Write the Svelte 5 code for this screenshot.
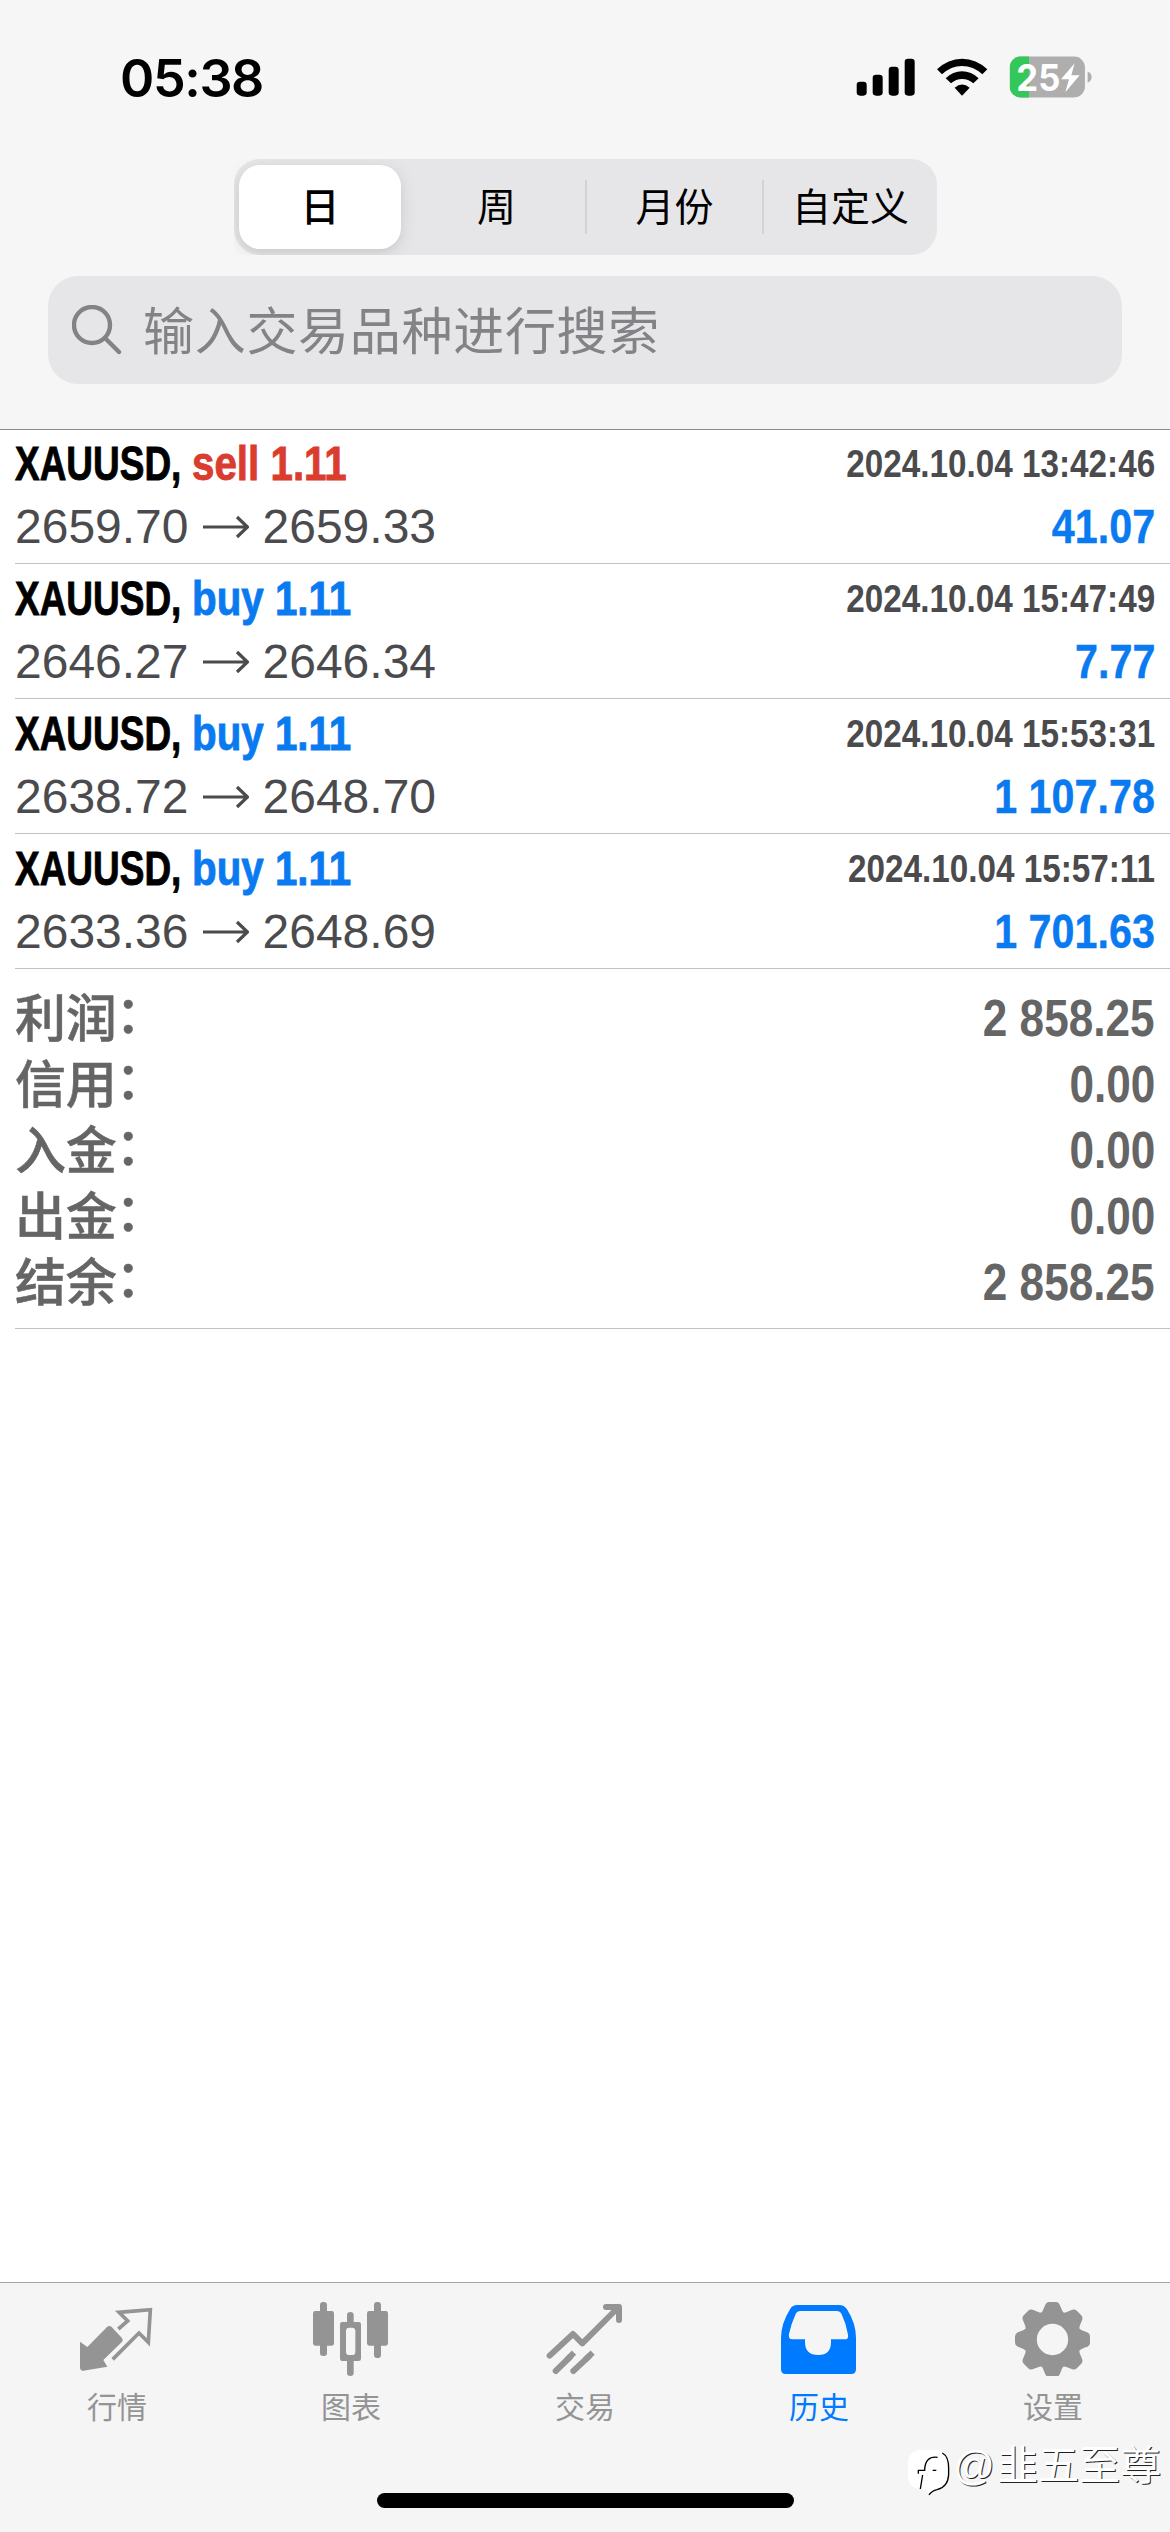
<script>
	const segments = ['日', '周', '月份', '自定义']
	let period = $state('日')
	let tab = $state('历史')

	const deals = [
		{ symbol: 'XAUUSD', side: 'sell', volume: '1.11', open: '2659.70', close: '2659.33', time: '2024.10.04 13:42:46', profit: '41.07' },
		{ symbol: 'XAUUSD', side: 'buy', volume: '1.11', open: '2646.27', close: '2646.34', time: '2024.10.04 15:47:49', profit: '7.77' },
		{ symbol: 'XAUUSD', side: 'buy', volume: '1.11', open: '2638.72', close: '2648.70', time: '2024.10.04 15:53:31', profit: '1 107.78' },
		{ symbol: 'XAUUSD', side: 'buy', volume: '1.11', open: '2633.36', close: '2648.69', time: '2024.10.04 15:57:11', profit: '1 701.63' }
	]

	const totals = [
		['利润', '2 858.25'],
		['信用', '0.00'],
		['入金', '0.00'],
		['出金', '0.00'],
		['结余', '2 858.25']
	]

	const tabs = [
		{ name: '行情', box: '225 90 252 228' },
		{ name: '图表', box: '927 90 252 228' },
		{ name: '交易', box: '429 90 252 228' },
		{ name: '历史', box: '51 90 252 228' },
		{ name: '设置', box: '753 90 252 228' }
	]
</script>

<div class="screen">
	<header>
		<div class="status">
			<span class="clock">05:38</span>
			<svg class="signals" viewBox="40 40 720 140">
				<rect x="48" y="126" width="30" height="42" rx="10" />
				<rect x="96" y="105" width="30" height="63" rx="10" />
				<rect x="144" y="81" width="30" height="87" rx="10" />
				<rect x="192" y="57" width="30" height="111" rx="10" />
				<path d="M289 89 Q322 57 364 57 Q407 57 440 89 L425 104 Q398 79 364 79 Q331 79 304 104Z" />
				<path d="M315 116 Q337 95 364 95 Q392 95 414 116 L398 131 Q383 118 364 118 Q346 118 331 131Z" />
				<path d="M342 144 Q364 125 387 144 L364 168Z" />
				<clipPath id="cell"><rect x="507" y="50" width="226" height="124" rx="34" /></clipPath>
				<g clip-path="url(#cell)">
					<rect x="507" y="50" width="226" height="124" fill="#aeaeae" />
					<rect x="507" y="50" width="58" height="124" fill="#34c759" />
				</g>
				<path d="M741 96 Q753 100 753 112 Q753 124 741 129Z" fill="#aeaeae" />
				<text x="527" y="153" textLength="132" lengthAdjust="spacingAndGlyphs">25</text>
				<path d="M702 71 L661 119 H685 L674 158 L717 107 H692Z" fill="#fff" />
			</svg>
		</div>

		<div class="segmented">
			{#each segments as s}
				<button class:active={s === period} onclick={() => (period = s)}>{s}</button>
			{/each}
		</div>

		<div class="search">
			<svg viewBox="0 0 50 50">
				<circle cx="20" cy="20" r="18" />
				<path d="M33 33 L47 47" />
			</svg>
			<span>输入交易品种进行搜索</span>
		</div>
	</header>

	<main>
		{#each deals as deal}
			<div class="deal">
				<div class="line">
					<div class="name">
						<span class="symbol">{deal.symbol},</span>
						<span class="side {deal.side}">{deal.side} {deal.volume}</span>
					</div>
					<span class="time">{deal.time}</span>
				</div>
				<div class="line second">
					<div class="prices">
						<span>{deal.open}</span>
						<svg viewBox="0 0 46 24"><path d="M0 12 H44 M34 2 L44.500 12 L34 22" /></svg>
						<span>{deal.close}</span>
					</div>
					<span class="profit">{deal.profit}</span>
				</div>
			</div>
		{/each}

		<div class="totals">
			{#each totals as [label, value]}
				<div class="total">
					<div class="label">{label}<i>：</i></div>
					<b>{value}</b>
				</div>
			{/each}
		</div>
	</main>

	<footer>
		<nav>
			{#each tabs as t, i}
				<button class:active={t.name === tab} onclick={() => (tab = t.name)}>
					<svg viewBox={t.box}>
						{#if i === 0}
							<path d="M240 215 L262 231 L321 171 Q328 165 335 171 L365 203 Q371 210 365 217 L310 270 L322 290 L250 302 Q240 303 240 292Z" />
							<path class="stroke" d="M355 177 L383 153 L357 127 L451 119 L445 217 L417 189 L338 268" />
						{:else if i === 1}
							<rect x="939" y="123" width="63" height="104" rx="7" />
							<rect x="960" y="96" width="21" height="162" rx="9" />
							<rect x="1101" y="123" width="63" height="104" rx="7" />
							<rect x="1122" y="96" width="21" height="168" rx="9" />
							<path fill-rule="evenodd" d="M1041 156 V135 Q1041 126 1051 126 Q1061 126 1061 135 V156 H1076 Q1083 156 1083 163 V266 Q1083 273 1076 273 H1061 V309 Q1061 318 1051 318 Q1041 318 1041 309 V273 H1027 Q1020 273 1020 266 V163 Q1020 156 1027 156Z M1048 173 Q1038 173 1038 183 V245 Q1038 255 1048 255 H1056 Q1066 255 1066 245 V183 Q1066 173 1056 173Z" />
						{:else if i === 2}
							<path class="trend" d="M449 257 L519 192 L547 220 L656 111 M618 111 H657 V150" />
							<path class="trend" d="M467 303 L510 261 M520 303 L566 260" />
							<path class="flat" d="M500 270 L522 248 M555 270 L578 248" />
						{:else if i === 3}
							<path fill-rule="evenodd" d="M111 105 H237 Q253 105 261 118 Q288 160 288 205 V298 Q288 312 274 312 H77 Q63 312 63 298 V205 Q63 160 91 116 Q98 105 111 105Z M121 123 Q111 123 107 132 Q94 160 87 192 Q84 208 97 208 H135 V216 Q135 255 175 255 Q213 255 213 216 V208 H255 Q266 208 264 194 Q258 160 245 133 Q240 123 230 123Z" />
						{:else}
							{#each [0, 45, 90, 135, 180, 225, 270, 315] as angle}
								<path transform="rotate({angle} 877.500 208.500)" d="M839 135 Q849 125 854 109 Q858 96 868 96 H887 Q897 96 901 109 Q906 125 916 135Z" />
							{/each}
							<circle class="ring" cx="877.500" cy="208.500" r="66" />
						{/if}
					</svg>
					<span>{t.name}</span>
				</button>
			{/each}
		</nav>
		<div class="home"></div>
	</footer>

	<div class="watermark">
		<svg viewBox="440 528 130 144">
			<path class="blob" d="M480 531 H530 Q562 535 562 570 V605 Q560 640 530 648 Q515 652 506 664 L500 650 Q443 652 443 610 V570 Q445 533 480 531Z" />
			<path d="M546 540 Q565 550 565 585 V605 Q563 642 530 650 Q515 653 506 666" />
			<path d="M532 553 Q494 548 493 592 H474 V602 M487 606 L480 648 M517 592 H528" />
		</svg>
		<span class="at">@</span><span>韭五至尊</span>
	</div>
</div>

<style>
	:global(body) {
		background: #fff;
	}
	.screen {
		position: relative;
		display: flex;
		flex-direction: column;
		width: 1170px;
		height: 2532px;
		overflow: hidden;
		background: #fff;
		font-family: 'Liberation Sans', 'Noto Sans CJK SC', sans-serif;
	}
	button {
		padding: 0;
		border: 0;
		background: none;
		font: inherit;
		color: inherit;
	}
	header {
		box-sizing: border-box;
		height: 430px;
		background: #f6f6f6;
		border-bottom: 1px solid #8c8c8e;
	}
	.status {
		display: flex;
		align-items: center;
		justify-content: space-between;
		height: 156px;
		padding: 1px 76px 0 120px;
		box-sizing: border-box;
	}
	.clock {
		font: 600 52px/60px Inter, sans-serif;
		letter-spacing: -1.4px;
	}
	.signals {
		width: 240px;
		height: 46.67px;
		margin-top: -4px;
	}
	.signals text {
		font: 700 111px Inter, sans-serif;
		fill: #fff;
	}
	.segmented {
		display: grid;
		grid-template-columns: 174px 177px 177px 175px;
		box-sizing: border-box;
		width: 703px;
		height: 96px;
		margin: 3px auto 0 234px;
		border-radius: 26px;
		background: #e6e6e8;
	}
	.segmented button {
		height: 54px;
		margin-top: 21px;
		padding-bottom: 6px;
		box-sizing: border-box;
		font-size: 39px;
		line-height: 48px;
		color: #000;
		font-family: 'Noto Sans CJK SC', sans-serif;
	}
	.segmented button:nth-child(n + 3) {
		border-left: 2px solid #d2d2d5;
	}
	.segmented .active {
		height: 84px;
		margin: 6px 7px 6px 5px;
		border-radius: 21px;
		background: #fff;
		font-weight: 500;
		line-height: 78px;
		box-shadow: 0 4px 18px rgba(0, 0, 0, 0.1), 0 3px 6px rgba(0, 0, 0, 0.04);
		clip-path: inset(-6px -30px -6px -5px);
	}
	.search {
		display: flex;
		align-items: center;
		gap: 21px;
		width: 1074px;
		height: 108px;
		margin: 21px 48px 0;
		padding-left: 24px;
		box-sizing: border-box;
		border-radius: 30px;
		background: #e6e6e8;
		color: #838387;
		font-size: 51px;
		line-height: 60px;
		letter-spacing: 0.7px;
	}
	.search span {
		padding-top: 5px;
	}
	.search svg {
		width: 50px;
		height: 50px;
		fill: none;
		stroke: #838387;
		stroke-width: 4.4;
		stroke-linecap: round;
	}
	main {
		flex: 1;
		margin-top: -1px;
		padding-left: 15px;
	}
	.deal {
		box-sizing: border-box;
		height: 135px;
		padding: 5px 15px 0 0;
		border-bottom: 1px solid #c2c2c4;
	}
	.line {
		display: flex;
		justify-content: space-between;
		align-items: center;
		height: 60px;
		font-size: 48px;
		line-height: 60px;
		color: #4b4b4e;
		white-space: nowrap;
	}
	.second {
		height: 65px;
	}
	.name {
		display: flex;
		font-weight: 700;
		-webkit-text-stroke: 0.9px;
	}
	.symbol {
		width: 177px;
		color: #000;
		transform: scaleX(0.77);
		transform-origin: 0 50%;
	}
	.side {
		transform: scaleX(0.84);
		transform-origin: 0 50%;
	}
	.sell {
		color: #da3c2e;
	}
	.buy,
	.profit {
		color: #0a7af0;
	}
	.time {
		font-size: 39px;
		font-weight: 700;
		transform: scaleX(0.853);
		transform-origin: 100% 50%;
	}
	.profit {
		font-weight: 700;
		-webkit-text-stroke: 0.4px;
		transform: scaleX(0.86);
		transform-origin: 100% 50%;
	}
	.prices {
		display: flex;
		align-items: center;
	}
	.prices svg {
		width: 46px;
		height: 24px;
		margin: 0 14px;
		fill: none;
		stroke: #4b4b4e;
		stroke-width: 3.2;
	}
	.totals {
		padding: 14px 15px 15px 0;
		border-bottom: 1px solid #c2c2c4;
	}
	.total {
		display: flex;
		justify-content: space-between;
		height: 66px;
		font-size: 51px;
		line-height: 66px;
		color: #656565;
	}
	.label {
		height: 62px;
		padding-top: 4px;
		font-weight: 500;
		letter-spacing: -0.3px;
		-webkit-text-stroke: 0.5px;
	}
	/* the full-width colon sits low in the font, so lift it to the middle */
	.label i {
		font-style: normal;
		line-height: 0;
		vertical-align: 4px;
		margin-left: -1px;
	}
	.total b {
		padding-top: 3px;
		height: 63px;
		transform: scaleX(0.865);
		transform-origin: 100% 50%;
	}
	footer {
		box-sizing: border-box;
		height: 250px;
		border-top: 1px solid #a4a4a6;
		background: #f5f5f5;
	}
	nav {
		display: grid;
		grid-template-columns: repeat(5, 1fr);
		height: 210px;
	}
	nav button {
		display: flex;
		flex-direction: column;
		align-items: center;
		padding-top: 17px;
		color: #949494;
	}
	nav .active {
		color: #007aff;
	}
	nav svg {
		width: 84px;
		height: 76px;
		fill: currentColor;
	}
	nav span {
		margin-top: 12px;
		font-size: 30px;
		line-height: 40px;
	}
	.stroke,
	.trend,
	.flat,
	.ring {
		fill: none;
		stroke: currentColor;
		stroke-width: 11;
	}
	.trend {
		stroke-width: 18;
		stroke-linecap: round;
		stroke-linejoin: round;
	}
	.flat {
		stroke-width: 18;
	}
	.ring {
		stroke-width: 38;
	}
	.home {
		width: 417px;
		height: 15px;
		margin: 0 auto;
		border-radius: 8px;
		background: #000;
	}
	.watermark {
		position: absolute;
		left: 907px;
		top: 2435px;
		display: flex;
		align-items: center;
		color: #fff;
		font-size: 41px;
		line-height: 48px;
		text-shadow: 1px 1px 0 #222;
		white-space: nowrap;
	}
	.watermark svg {
		width: 43.3px;
		height: 48px;
		margin-top: 14px;
		fill: none;
		stroke: #000;
		stroke-width: 4;
	}
	.watermark .blob {
		fill: #fff;
		stroke: none;
	}
	.at {
		width: 44px;
		margin-left: 3px;
	}
</style>
